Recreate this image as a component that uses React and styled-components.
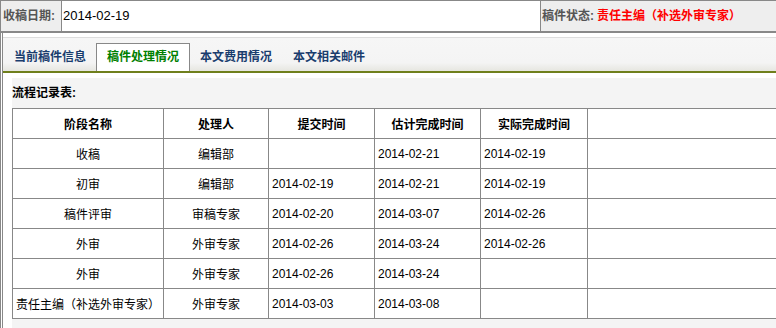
import React from "react";
import styled, { createGlobalStyle } from "styled-components";

const GlobalStyle = createGlobalStyle`
  html, body {
    margin: 0;
    padding: 0;
    background: #fff;
    overflow: hidden;
  }
  body {
    font-family: "Liberation Sans", "Noto Sans CJK SC", sans-serif;
    font-size: 12px;
    color: #000;
  }
`;

const rows = [
  ["收稿", "编辑部", "", "2014-02-21", "2014-02-19"],
  ["初审", "编辑部", "2014-02-19", "2014-02-21", "2014-02-19"],
  ["稿件评审", "审稿专家", "2014-02-20", "2014-03-07", "2014-02-26"],
  ["外审", "外审专家", "2014-02-26", "2014-03-24", "2014-02-26"],
  ["外审", "外审专家", "2014-02-26", "2014-03-24", ""],
  ["责任主编（补选外审专家）", "外审专家", "2014-03-03", "2014-03-08", ""],
];

const columns = [
  { title: "阶段名称", width: 151 },
  { title: "处理人", width: 105 },
  { title: "提交时间", width: 106 },
  { title: "估计完成时间", width: 106 },
  { title: "实际完成时间", width: 107 },
  { title: "", width: 213 },
];

const tabs = ["当前稿件信息", "稿件处理情况", "本文费用情况", "本文相关邮件"];

const App = () => {
  return (
    <Page>
      <GlobalStyle />
      <InfoBar>
        <Label>收稿日期:</Label>
        <Value>2014-02-19</Value>
        <Status>
          <StatusLabel>稿件状态:</StatusLabel>
          <StatusValue>责任主编（补选外审专家）</StatusValue>
        </Status>
      </InfoBar>

      <Section>
        <TabBar>
          {tabs.map((t, i) => (
            <Tab key={t} $active={i === 1}>
              {t}
            </Tab>
          ))}
        </TabBar>

        <Body>
          <Panel>
            <Title>流程记录表:</Title>
            <Table>
              <colgroup>
                {columns.map((c, i) => (
                  <col key={i} style={{ width: c.width }} />
                ))}
              </colgroup>
              <thead>
                <tr>
                  {columns.map((c, i) => (
                    <Th key={i}>{c.title}</Th>
                  ))}
                </tr>
              </thead>
              <tbody>
                {rows.map((r, i) => (
                  <tr key={i}>
                    <Td $center>{r[0]}</Td>
                    <Td $center>{r[1]}</Td>
                    <Td>{r[2]}</Td>
                    <Td>{r[3]}</Td>
                    <Td>{r[4]}</Td>
                    <Td />
                  </tr>
                ))}
              </tbody>
            </Table>
          </Panel>
        </Body>
      </Section>
    </Page>
  );
};

const Page = styled.div`
  width: 800px;
  height: 328px;
  overflow: hidden;
`;

const InfoBar = styled.div`
  display: flex;
  height: 30px;
  border-top: 1px solid #888;
  border-left: 1px solid #888;
  border-bottom: 2px solid #888;
  font-weight: bold;
`;

const Label = styled.div`
  width: 58px;
  padding-left: 2px;
  background: #eee;
  border-right: 1px solid #888;
  color: #555;
  line-height: 30px;
  white-space: nowrap;
`;

const Value = styled.div`
  flex: 1;
  padding-left: 1px;
  font-size: 13px;
  font-weight: normal;
  line-height: 30px;
  background: #fff;
`;

const Status = styled.div`
  width: 258px;
  padding-left: 1px;
  background: #eee;
  border-left: 1px solid #888;
  line-height: 30px;
  white-space: nowrap;
`;

const StatusLabel = styled.span`
  color: #555;
`;

const StatusValue = styled.span`
  color: #f00;
  margin-left: 3px;
`;

const Section = styled.div`
  border-left: 3px double #888;
  padding-top: 4px;
`;

const TabBar = styled.div`
  display: flex;
  align-items: flex-end;
  height: 33px;
  padding-left: 0;
  border-top: 1px solid #ddd;
  border-bottom: 2px solid #6f7f1c;
  background: linear-gradient(to bottom, #f6f6f6 0%, #f4f4f4 75%, #e6e6e0 100%);
`;

const Tab = styled.div`
  box-sizing: border-box;
  width: 94px;
  height: 28px;
  margin-right: -1px;
  line-height: 27px;
  text-align: center;
  font-weight: bold;
  color: ${(p) => (p.$active ? "#008000" : "#1a3d6e")};
  background: ${(p) => (p.$active ? "#fff" : "transparent")};
  border: 1px solid ${(p) => (p.$active ? "#888" : "transparent")};
  border-bottom: none;
  white-space: nowrap;
`;

const Body = styled.div`
  padding: 5px 0 0 9px;
`;

const Panel = styled.div`
  background: #f4f4f4;
  height: 260px;
`;

const Title = styled.div`
  height: 30px;
  line-height: 30px;
  font-weight: bold;
`;

const Table = styled.table`
  table-layout: fixed;
  width: 788px;
  border-collapse: collapse;
  background: #fff;
`;

const Th = styled.th`
  height: 29px;
  padding: 0;
  border: 1px solid #888;
  font-weight: bold;
  text-align: center;
`;

const Td = styled.td`
  height: 29px;
  padding: 0 3px;
  border: 1px solid #888;
  text-align: ${(p) => (p.$center ? "center" : "left")};
  white-space: nowrap;
`;

export default App;
